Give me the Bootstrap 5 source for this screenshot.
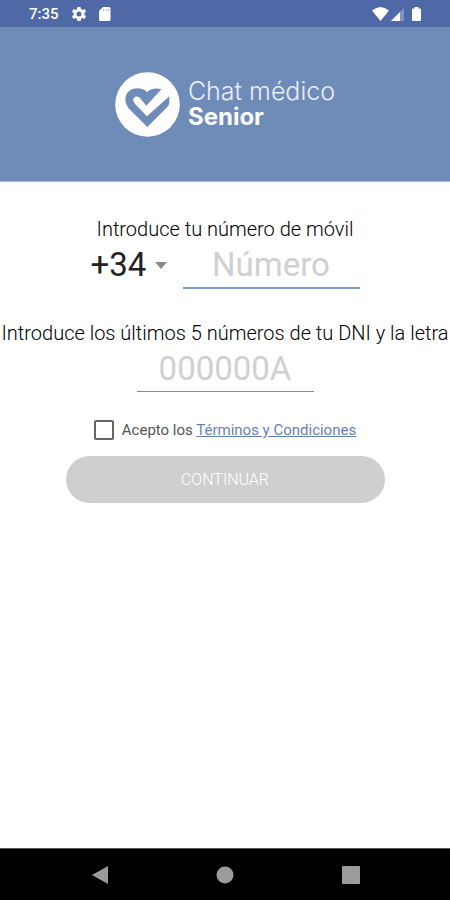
<!DOCTYPE html>
<html lang="es">
<head>
<meta charset="utf-8">
<meta name="viewport" content="width=device-width, initial-scale=1">
<title>Chat médico Senior</title>
<link href="https://cdn.jsdelivr.net/npm/bootstrap@5.3.0/dist/css/bootstrap.min.css" rel="stylesheet">
<style>
  body { font-family: Roboto, sans-serif; color: #222; background: #fff; }
  .status-bar { background: #4e69a6; height: 27px; padding: 2px 27px 0 29px; font-size: 15px; font-weight: 500; }
  .brand-bar { background: #6f8bb7; height: 155px; border-bottom: 1px solid #a9b9d4; }
  .brand-name { font-family: Inter, sans-serif; font-size: 25px; line-height: 26px; font-weight: 300; color: #e9effa; }
  .brand-name strong { font-size: 24px; font-weight: 700; color: #fff; }
  .field-label { font-size: 20px; line-height: 24px; font-weight: 300; white-space: nowrap; color: #000; }
  .field-line { width: 177px; height: 47px; font-size: 33px; font-weight: 400; border: 0; border-bottom: 1px solid #8a8a8a; border-radius: 0; text-align: center; padding: 2px 0 0; background: transparent; outline: 0; }
  .field-line::placeholder { color: #d0d0d0; opacity: 1; }
  .field-phone { height: 48px; border-bottom: 2px solid #7f9fc8; }
  .prefix { appearance: none; border: 0; background: transparent; font-size: 33px; line-height: 40px; width: 56px; padding: 0; color: #222; outline: 0; }
  .terms-check { appearance: none; width: 20px; height: 20px; border: 2px solid #666; border-radius: 2px; margin: 0; }
  .form-start { padding-top: 35px; }
  .terms { font-size: 15px; line-height: 20px; color: #555; margin: 28px 0 16px; }
  .terms a { color: #6780b8; }
  .send { width: 319px; max-width: 100%; height: 47px; border-radius: 24px; background: #cfcfcf; color: #fff; font-size: 16px; font-weight: 300; border: 0; }
  .system-nav { background: #000; height: 52px; border-top: 1px solid #555; padding: 0 37px; }
  .system-nav button { width: 125px; }
</style>
</head>
<body class="d-flex flex-column min-vh-100">
<div class="status-bar d-flex align-items-center text-white">
  <span>7:35</span>
  <svg class="ms-2 me-1" width="24" height="18" viewBox="0 0 24 18" aria-hidden="true"><g transform="translate(12 8)" fill="#fff"><path fill-rule="evenodd" d="M-1.500-7h3l.5 2 1.500.9 2-.8 1.500 2.600-1.600 1.400v1.800l1.600 1.400-1.500 2.600-2-.8-1.500.9-.5 2h-3l-.5-2-1.500-.9-2 .8-1.500-2.600 1.600-1.400v-1.800l-1.600-1.400 1.500-2.600 2 .8 1.500-.9zM0-2.500a2.500 2.500 0 1 0 0 5a2.500 2.500 0 1 0 0-5"/></g></svg>
  <svg class="ms-1" width="13" height="18" viewBox="0 0 13 18" aria-hidden="true"><path fill="#fff" d="M4 1H10a1.500 1.500 0 0 1 1.500 1.500v11A1.500 1.500 0 0 1 10 15H1.500a1.500 1.500 0 0 1-1.500-1.500V5z"/><path stroke="#aab7d6" d="M4.500 3v2M7 3v2M9.500 3v2"/></svg>
  <svg class="ms-auto" width="52" height="18" viewBox="0 1 52 18" aria-hidden="true"><path fill="#fff" d="M1 5.500Q9.500-1.500 18 5.500L9.500 16z"/><path fill="#8194c4" d="M33 3v13H20z"/><path fill="#fff" d="M29 7v9h-9z"/><path fill="#fff" d="M43.500 2h4v1.500h1.500q1 0 1 1V15q0 1-1 1h-7q-1 0-1-1V4.500q0-1 1-1h1.500z"/></svg>
</div>
<header class="brand-bar d-flex justify-content-center align-items-center gap-2">
  <svg width="65" height="65" viewBox="0 0 195 195" role="img" aria-label="Logotipo"><circle cx="97.500" cy="97.500" r="97" fill="#fff"/><path fill="#6f8bb7" d="M97 165L42 110C20 83 34 49 67 49q17 0 29 11q18-15 43-8L94 101L80 85Q70 68 58 76Q50 83 61 97L96 133L163 73V93Q163 99 156 106z"/></svg>
  <div class="brand-name d-flex flex-column"><span>Chat médico</span><strong>Senior</strong></div>
</header>
<main class="flex-grow-1 form-start">
  <form class="d-flex flex-column align-items-center">
    <label class="field-label" for="phone">Introduce tu número de móvil</label>
    <div class="d-flex align-items-center mb-4">
      <select class="prefix" aria-label="Prefijo"><option>+34</option></select>
      <svg class="ms-2 me-3" width="12" height="7" viewBox="0 0 12 7" aria-hidden="true"><path fill="#8a8a8a" d="M0 0h12L6 7z"/></svg>
      <input class="field-line field-phone" id="phone" type="tel" placeholder="Número">
    </div>
    <label class="field-label mt-2" for="dni">Introduce los últimos 5 números de tu DNI y la letra</label>
    <input class="field-line" id="dni" type="text" placeholder="000000A">
    <div class="terms d-flex align-items-center gap-2">
      <input class="terms-check" id="terms" type="checkbox">
      <label for="terms">Acepto los <a href="#">Términos y Condiciones</a></label>
    </div>
    <button class="btn send" type="button">CONTINUAR</button>
  </form>
</main>
<nav class="system-nav d-flex justify-content-between align-items-center" aria-label="Sistema">
  <button class="btn p-0 border-0" type="button" aria-label="Atrás"><svg width="18" height="18" viewBox="0 0 18 18"><path fill="#9b9b9b" d="M1 9L17 0v18z"/></svg></button>
  <button class="btn p-0 border-0" type="button" aria-label="Inicio"><svg width="18" height="18" viewBox="0 0 18 18"><circle cx="9" cy="9" r="8.500" fill="#9b9b9b"/></svg></button>
  <button class="btn p-0 border-0" type="button" aria-label="Recientes"><svg width="18" height="18" viewBox="0 0 18 18"><rect width="18" height="18" rx="1" fill="#9b9b9b"/></svg></button>
</nav>
<script src="https://cdn.jsdelivr.net/npm/bootstrap@5.3.0/dist/js/bootstrap.bundle.min.js"></script>
</body>
</html>
